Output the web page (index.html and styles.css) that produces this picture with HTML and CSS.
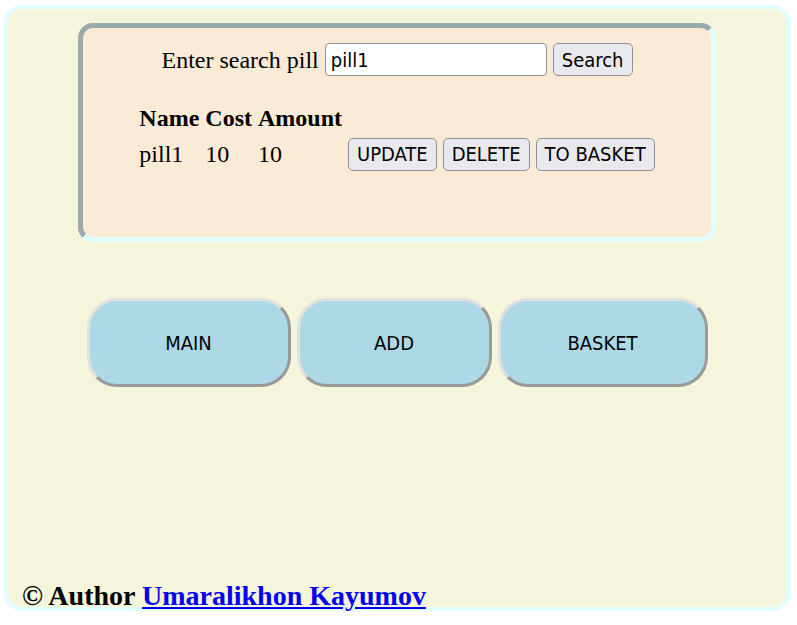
FILE: index.html
```html
<!DOCTYPE html>
<html lang="en">
<head>
<meta charset="utf-8">
<title>Pills</title>
<link rel="stylesheet" href="styles.css">
</head>
<body>
<div class="page">
  <div class="card">
    <div class="search-row">
      <span class="search-label">Enter search pill</span>
      <input class="search-input" type="text" value="pill1">
      <button class="btn">Search</button>
    </div>
    <table class="pills">
      <thead>
        <tr><th>Name</th><th>Cost</th><th>Amount</th></tr>
      </thead>
      <tbody>
        <tr>
          <td>pill1</td><td>10</td><td>10</td>
          <td><button class="btn">UPDATE</button></td>
          <td><button class="btn">DELETE</button></td>
          <td><button class="btn">TO BASKET</button></td>
        </tr>
      </tbody>
    </table>
  </div>
  <nav class="nav">
    <button class="nav-btn nav-main">MAIN</button>
    <button class="nav-btn nav-add">ADD</button>
    <button class="nav-btn nav-basket">BASKET</button>
  </nav>
  <h3 class="footer">© Author <a href="#" class="author">Umaralikhon Kayumov</a></h3>
</div>
</body>
</html>
```
FILE: styles.css
```css
html, body {
  margin: 0;
  padding: 0;
  background: #ffffff;
}

body {
  font-family: "Liberation Serif", "Times New Roman", serif;
  font-size: 24px;
  color: #000;
}

.page {
  box-sizing: border-box;
  width: 786px;
  height: 606px;
  margin: 5px 0 0 4px;
  border: 4px solid #e0ffff;
  border-radius: 18px;
  background: #f5f5dc;
  display: flex;
  flex-direction: column;
  align-items: center;
}

.card {
  box-sizing: border-box;
  width: 638px;
  height: 219px;
  margin-top: 14px;
  padding-top: 15px;
  border: 5px solid;
  border-color: #97abab #e0ffff #e0ffff #97abab;
  border-radius: 15px;
  background: #faebd7;
}

.search-row {
  display: flex;
  justify-content: center;
  align-items: center;
  gap: 6px;
  height: 33px;
}

.search-label {
  margin-top: 2px;
}

.search-input {
  box-sizing: border-box;
  width: 222px;
  height: 33px;
  margin: 0;
  padding: 0 5px;
  border: 1px solid #8f8f9d;
  border-radius: 4px;
  background: #fff;
  font-family: "DejaVu Sans Condensed", "DejaVu Sans", sans-serif;
  font-stretch: condensed;
  font-size: 20px;
  color: #000;
}

.btn {
  box-sizing: border-box;
  height: 33px;
  margin: 0;
  padding: 0 8px;
  border: 1px solid #8f8f9d;
  border-radius: 5px;
  background: #e9e9ed;
  font-family: "DejaVu Sans Condensed", "DejaVu Sans", sans-serif;
  font-stretch: condensed;
  font-size: 20px;
  color: #000;
}

.pills {
  margin: 24px auto 0;
  border-spacing: 3px;
}

.pills th,
.pills td {
  padding: 1.5px;
  line-height: normal;
}

.pills td {
  text-align: left;
  vertical-align: middle;
}

.nav {
  display: flex;
  justify-content: center;
  gap: 6px;
  margin-top: 56px;
}

.nav-btn {
  box-sizing: border-box;
  height: 89px;
  margin: 0;
  padding: 0;
  border: 3px solid;
  border-color: #e0e0e0 #999999 #999999 #e0e0e0;
  border-radius: 30px;
  background: #add8e6;
  font-family: "DejaVu Sans Condensed", "DejaVu Sans", sans-serif;
  font-stretch: condensed;
  font-size: 20px;
  color: #000;
}

.nav-main { width: 204px; }
.nav-add { width: 195px; }
.nav-basket { width: 210px; }

.footer {
  align-self: stretch;
  margin: auto 0 -3px;
  padding-left: 14px;
  font-size: 28px;
  font-weight: bold;
  line-height: 28px;
}

.author {
  color: #0000ee;
  text-decoration: underline;
}
```
